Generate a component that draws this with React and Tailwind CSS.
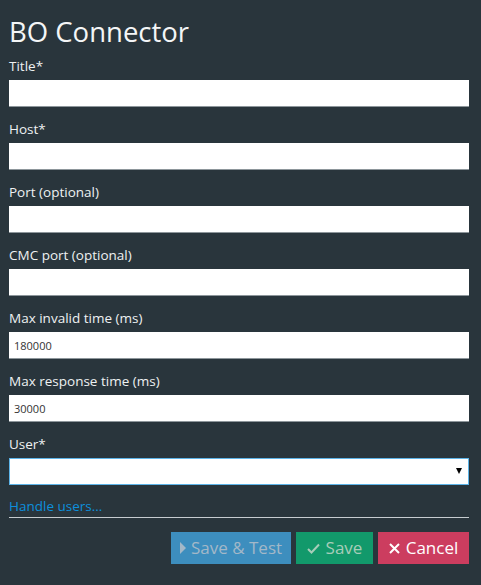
import React from 'react';

const fields = [
  { label: 'Title*', value: '' },
  { label: 'Host*', value: '' },
  { label: 'Port (optional)', value: '' },
  { label: 'CMC port (optional)', value: '' },
  { label: 'Max invalid time (ms)', value: '180000' },
  { label: 'Max response time (ms)', value: '30000' },
];

export default function App() {
  return (
    <div className="w-[481px] h-[585px] bg-[#29353c] pl-[9px] pr-[12px] pt-[14px] text-white" style={{ fontFamily: '"Open Sans", "Noto Sans", sans-serif' }}>
      <h1 className="text-[27.5px] leading-[36px] mb-[6px] text-[#f4f6f7]">BO Connector</h1>

      <div className="flex flex-col gap-[12px]">
        {fields.map((f) => (
          <div key={f.label} className="flex flex-col">
            <label className="text-[13.5px] leading-[20px] mb-[4px] text-[#eef1f2]">{f.label}</label>
            <input
              defaultValue={f.value}
              className="h-[27px] w-full bg-white border-b border-[#8d969b] px-[5px] text-[11px] text-[#333] outline-none"
            />
          </div>
        ))}

        <div className="flex flex-col">
          <label className="text-[13.5px] leading-[20px] mb-[4px] text-[#eef1f2]">User*</label>
          <div className="relative h-[27px] w-full bg-white border border-[#5db4e8]">
            <span className="absolute right-[6px] top-[9px] w-0 h-0 border-l-[3.5px] border-r-[3.5px] border-t-[6px] border-l-transparent border-r-transparent border-t-black" />
          </div>
        </div>
      </div>

      <div className="mt-[12px] border-b border-[#c6ccd0] pb-[1px]">
        <a className="text-[13.5px] leading-[19px] text-[#0d8fdb] block">Handle users...</a>
      </div>

      <div className="flex justify-end gap-[5px] mt-[14px]">
        <button className="h-[32px] w-[120px] bg-[#3d8ebe] text-[#a3b8c8] text-[17px] flex items-center justify-center gap-[4px]">
          <svg width="7" height="12" viewBox="0 0 7 12"><path d="M0 0 L6 6 L0 12 Z" fill="#a3b8c8" /></svg>
          Save &amp; Test
        </button>
        <button className="h-[32px] w-[77px] bg-[#12996b] text-[#a7cdb9] text-[17px] flex items-center justify-center gap-[6px]">
          <svg width="13" height="11" viewBox="0 0 13 11"><path d="M1 6 L4.5 9.5 L12 1.5" stroke="#a7cdb9" strokeWidth="2" fill="none" /></svg>
          Save
        </button>
        <button className="h-[32px] w-[91px] bg-[#cc3d5f] text-white text-[17px] flex items-center justify-center gap-[6px]">
          <svg width="11" height="11" viewBox="0 0 11 11"><path d="M1 1 L10 10 M10 1 L1 10" stroke="#fff" strokeWidth="2" /></svg>
          Cancel
        </button>
      </div>
    </div>
  );
}
